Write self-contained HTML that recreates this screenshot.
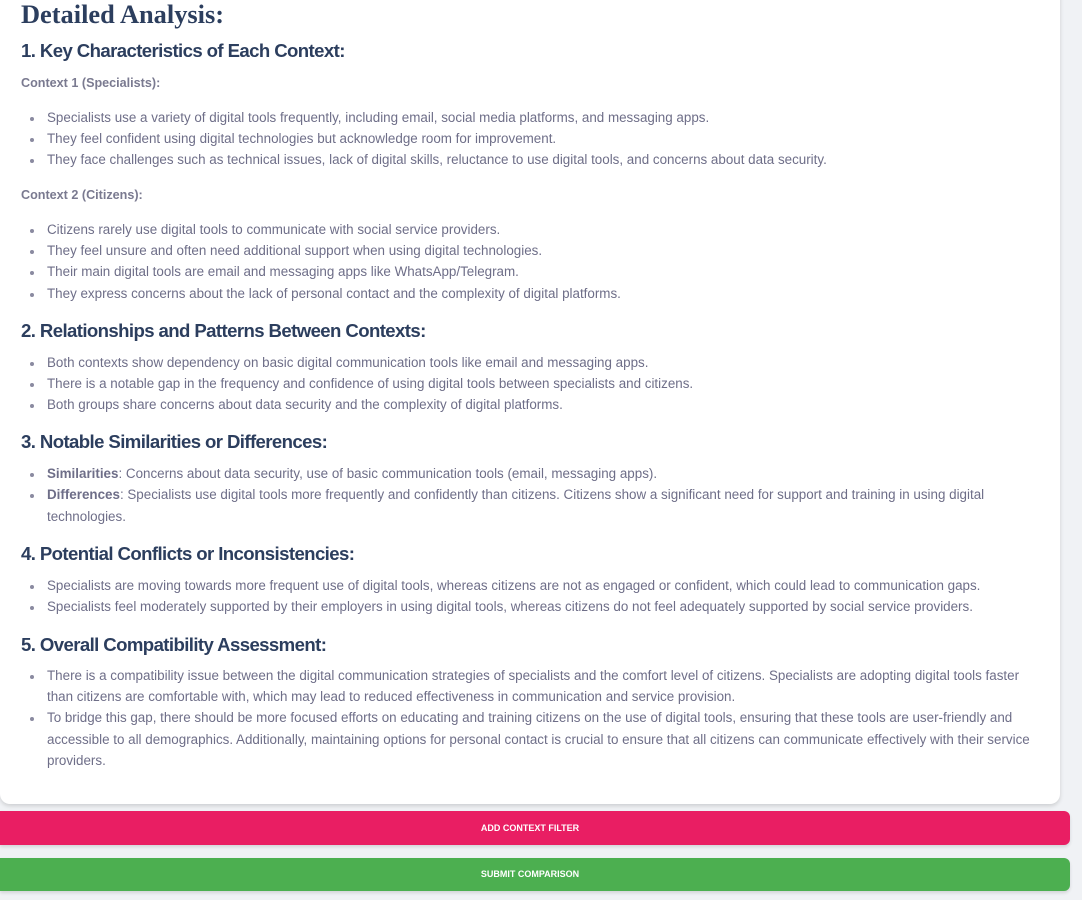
<!DOCTYPE html>
<html><head><style>
body{margin:0;width:1082px;height:900px;background:#f0f2f5;position:relative;overflow:hidden;font-family:"Liberation Sans",sans-serif}
.card{position:absolute;left:0;top:-20px;width:1060px;height:824px;background:#fff;border-radius:10px;box-shadow:0 2px 4px rgba(0,0,0,.15)}
.t{position:absolute;left:21px;white-space:nowrap}
.ti{font-family:"Liberation Serif",serif;font-weight:bold;font-size:26.4px;color:#2c3e5e;line-height:28px}
.h{font-weight:bold;font-size:18.6px;color:#2c3e5e;letter-spacing:-0.6px;line-height:24px}
.c{font-weight:bold;font-size:12.6px;color:#7a7a90;line-height:16px}
.b{left:47px;font-size:13.4px;color:#6e6e88;line-height:16px}
.b:before{content:"";position:absolute;left:-17px;top:7px;width:4px;height:4px;border-radius:50%;background:#8a8aa0}
.n:before{display:none}
.b b{color:#6e6e88}
.btn{position:absolute;left:0;width:1070px;border-radius:0 6px 6px 0;color:#fff;font-weight:bold;font-size:9px;box-shadow:0 2px 3px rgba(0,0,0,.12)}
.btn span{display:block;width:1060px;text-align:center}
</style></head><body>
<div class="card"></div>
<div class="t ti" style="top:0">Detailed Analysis:</div>
<div class="t h" style="top:39px">1. Key Characteristics of Each Context:</div>
<div class="t c" style="top:75px">Context 1 (Specialists):</div>
<div class="t b" style="top:110px">Specialists use a variety of digital tools frequently, including email, social media platforms, and messaging apps.</div>
<div class="t b" style="top:131px">They feel confident using digital technologies but acknowledge room for improvement.</div>
<div class="t b" style="top:152px">They face challenges such as technical issues, lack of digital skills, reluctance to use digital tools, and concerns about data security.</div>
<div class="t c" style="top:187px">Context 2 (Citizens):</div>
<div class="t b" style="top:222px">Citizens rarely use digital tools to communicate with social service providers.</div>
<div class="t b" style="top:243px">They feel unsure and often need additional support when using digital technologies.</div>
<div class="t b" style="top:264px">Their main digital tools are email and messaging apps like WhatsApp/Telegram.</div>
<div class="t b" style="top:286px">They express concerns about the lack of personal contact and the complexity of digital platforms.</div>
<div class="t h" style="top:319px">2. Relationships and Patterns Between Contexts:</div>
<div class="t b" style="top:355px">Both contexts show dependency on basic digital communication tools like email and messaging apps.</div>
<div class="t b" style="top:376px">There is a notable gap in the frequency and confidence of using digital tools between specialists and citizens.</div>
<div class="t b" style="top:397px">Both groups share concerns about data security and the complexity of digital platforms.</div>
<div class="t h" style="top:430px">3. Notable Similarities or Differences:</div>
<div class="t b" style="top:466px"><b>Similarities</b>: Concerns about data security, use of basic communication tools (email, messaging apps).</div>
<div class="t b" style="top:487px"><b>Differences</b>: Specialists use digital tools more frequently and confidently than citizens. Citizens show a significant need for support and training in using digital</div>
<div class="t b n" style="top:509px">technologies.</div>
<div class="t h" style="top:542px">4. Potential Conflicts or Inconsistencies:</div>
<div class="t b" style="top:578px">Specialists are moving towards more frequent use of digital tools, whereas citizens are not as engaged or confident, which could lead to communication gaps.</div>
<div class="t b" style="top:599px">Specialists feel moderately supported by their employers in using digital tools, whereas citizens do not feel adequately supported by social service providers.</div>
<div class="t h" style="top:633px">5. Overall Compatibility Assessment:</div>
<div class="t b" style="top:668px">There is a compatibility issue between the digital communication strategies of specialists and the comfort level of citizens. Specialists are adopting digital tools faster</div>
<div class="t b n" style="top:689px">than citizens are comfortable with, which may lead to reduced effectiveness in communication and service provision.</div>
<div class="t b" style="top:710px">To bridge this gap, there should be more focused efforts on educating and training citizens on the use of digital tools, ensuring that these tools are user-friendly and</div>
<div class="t b n" style="top:732px">accessible to all demographics. Additionally, maintaining options for personal contact is crucial to ensure that all citizens can communicate effectively with their service</div>
<div class="t b n" style="top:753px">providers.</div>
<div class="btn" style="top:811px;height:34px;line-height:34px;background:#e91e63"><span>ADD CONTEXT FILTER</span></div>
<div class="btn" style="top:858px;height:33px;line-height:33px;background:#4caf50"><span>SUBMIT COMPARISON</span></div>
</body></html>
